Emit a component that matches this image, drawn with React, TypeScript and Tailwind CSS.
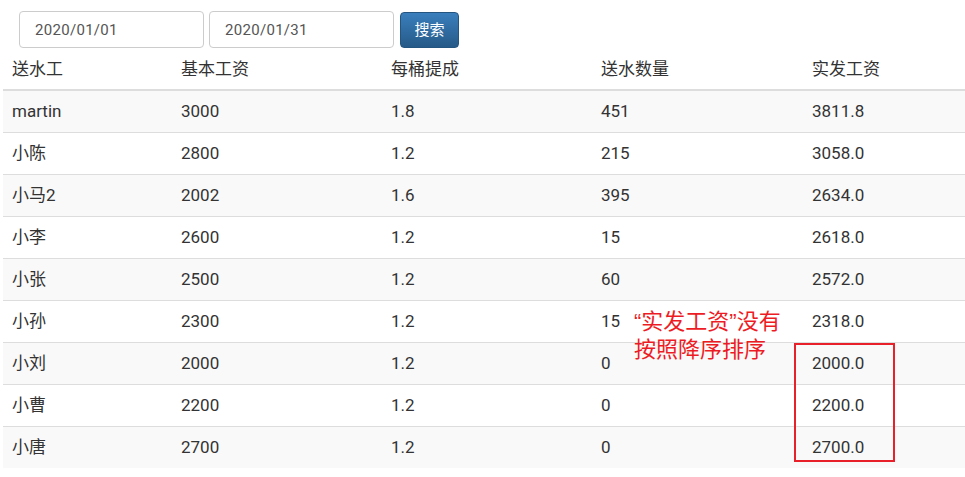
const headers = ["送水工", "基本工资", "每桶提成", "送水数量", "实发工资"];

const rows = [
  ["martin", "3000", "1.8", "451", "3811.8"],
  ["小陈", "2800", "1.2", "215", "3058.0"],
  ["小马2", "2002", "1.6", "395", "2634.0"],
  ["小李", "2600", "1.2", "15", "2618.0"],
  ["小张", "2500", "1.2", "60", "2572.0"],
  ["小孙", "2300", "1.2", "15", "2318.0"],
  ["小刘", "2000", "1.2", "0", "2000.0"],
  ["小曹", "2200", "1.2", "0", "2200.0"],
  ["小唐", "2700", "1.2", "0", "2700.0"],
];

const cols = "grid grid-cols-[169px_210px_210px_211px_210px] w-[1010px]";

export default function App() {
  return (
    <div className="relative w-[965px] h-[477px] overflow-hidden bg-white text-[#333] font-['Roboto','Noto_Sans_CJK_SC',sans-serif]">
      {/* search bar */}
      <div className="flex items-start pl-[19px] pt-[11px]">
        <input
          readOnly
          value="2020/01/01"
          className="w-[185px] h-[37px] rounded-[4px] border border-[#ccc] px-[15px] text-[15px] tracking-[0.3px] text-[#555] outline-none"
        />
        <input
          readOnly
          value="2020/01/31"
          className="ml-[5px] w-[185px] h-[37px] rounded-[4px] border border-[#ccc] px-[15px] text-[15px] tracking-[0.3px] text-[#555] outline-none"
        />
        <button className="ml-[6px] mt-[1px] w-[59px] h-[36px] rounded-[4px] border border-[#245580] bg-gradient-to-b from-[#3a7fbd] to-[#265a88] text-white text-[15px]">
          搜索
        </button>
      </div>

      {/* table */}
      <div className="ml-[3px] mt-[2px] text-[17px]">
        <div className={`${cols} h-[41px] items-center border-b-2 border-[#ddd]`}>
          {headers.map((h) => (
            <div key={h} className="pl-[9px]">
              {h}
            </div>
          ))}
        </div>
        {rows.map((r, i) => (
          <div
            key={r[0]}
            className={`${cols} items-center ${
              i === 0 ? "h-[41px]" : "h-[42px] border-t border-[#ddd]"
            } ${i % 2 === 0 ? "bg-[#f9f9f9]" : "bg-white"}`}
          >
            {r.map((c, j) => (
              <div key={j} className="pl-[9px]">
                {c}
              </div>
            ))}
          </div>
        ))}
      </div>

      {/* annotation */}
      <div className="absolute left-[634px] top-[308px] text-[22px] leading-[28px] text-[#ed1c24] font-['Liberation_Sans','Noto_Sans_CJK_SC',sans-serif]">
        <div>“实发工资”没有</div>
        <div>按照降序排序</div>
      </div>
      <div className="absolute left-[794px] top-[343px] w-[101px] h-[119px] border-2 border-[#e8202a]" />
    </div>
  );
}
